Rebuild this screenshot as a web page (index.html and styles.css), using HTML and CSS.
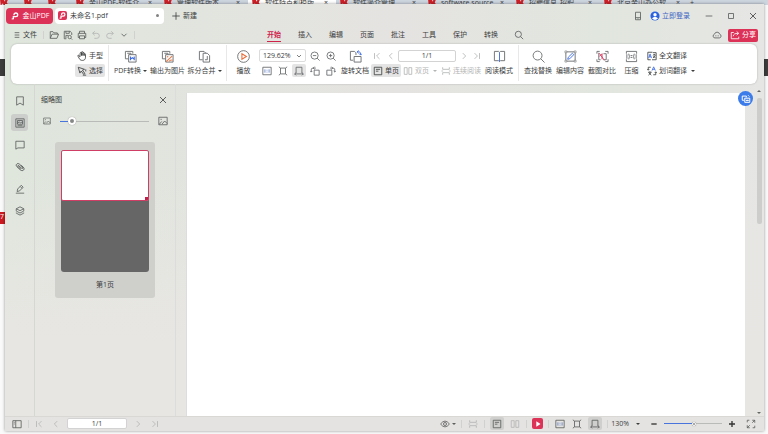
FILE: index.html
```html
<!DOCTYPE html>
<html lang="zh-CN">
<head>
<meta charset="utf-8">
<title>未命名1.pdf</title>
<link rel="stylesheet" href="styles.css">
</head>
<body>
<svg class="sprite" aria-hidden="true">
  <symbol id="logo" viewBox="0 0 12 12"><path d="M4 9.500V6.800h3a2.200 2.200 0 1 0-2.200-2.200v.6" fill="none" stroke="#fff" stroke-width="1.600"/><path d="M2 9.500h2.500" stroke="#fff" stroke-width="1.200"/></symbol>
  <symbol id="menu" viewBox="0 0 12 12"><path d="M2.500 2.500h7M2.500 6h7M2.500 9.500h7"/></symbol>
  <symbol id="folder" viewBox="0 0 12 12"><path d="M1.500 10V2h3.300l1.200 1.500h4V5M1.500 10 3.700 5H11.500l-2 5z"/></symbol>
  <symbol id="save" viewBox="0 0 12 12"><path d="M4 10.500H1.500v-9h7l2 2V6M3.500 1.500v2.500h4V1.500M3.500 10V6.500h3"/><circle cx="8" cy="8.500" r="2"/><path d="m9.500 10 1.500 1.500"/></symbol>
  <symbol id="print" viewBox="0 0 12 12"><path d="M3 4V1.500h6V4M3 9H1.500V4h9v5H9M3 7h6v3.500H3z"/></symbol>
  <symbol id="undo" viewBox="0 0 12 12"><path d="M4.500 1.500 2 4l2.500 2.500M2 4h5a3 3 0 0 1 0 6H4"/></symbol>
  <symbol id="redo" viewBox="0 0 12 12"><path d="M7.500 1.500 10 4 7.500 6.500M10 4H5a3 3 0 0 0 0 6h3"/></symbol>
  <symbol id="down" viewBox="0 0 12 12"><path d="m3 4.500 3 3 3-3"/></symbol>
  <symbol id="left" viewBox="0 0 12 12"><path d="M7.500 2.500 4 6l3.500 3.500"/></symbol>
  <symbol id="right" viewBox="0 0 12 12"><path d="M4.500 2.500 8 6 4.500 9.500"/></symbol>
  <symbol id="first" viewBox="0 0 12 12"><path d="M3 2.500v7M9 2.500 5.500 6 9 9.500"/></symbol>
  <symbol id="last" viewBox="0 0 12 12"><path d="M9 2.500v7M3 2.500 6.500 6 3 9.500"/></symbol>
  <symbol id="search" viewBox="0 0 12 12"><circle cx="5.200" cy="5.200" r="3.700"/><path d="m8 8 3 3"/></symbol>
  <symbol id="zoomout" viewBox="0 0 12 12"><circle cx="5.500" cy="5.500" r="4.300"/><path d="M3.500 5.500h4M8.600 8.600l2.900 2.900"/></symbol>
  <symbol id="zoomin" viewBox="0 0 12 12"><circle cx="5.500" cy="5.500" r="4.300"/><path d="M3.500 5.500h4M5.500 3.500v4M8.600 8.600l2.900 2.900"/></symbol>
  <symbol id="plus" viewBox="0 0 12 12"><path d="M6 1.500v9M1.500 6h9"/></symbol>
  <symbol id="minus" viewBox="0 0 12 12"><path d="M2 6h8"/></symbol>
  <symbol id="close" viewBox="0 0 12 12"><path d="m3 3 6 6M9 3 3 9"/></symbol>
  <symbol id="square" viewBox="0 0 12 12"><path d="M3 3h6v6H3z"/></symbol>
  <symbol id="phone" viewBox="0 0 12 12"><path d="M3 1.500h6v9H3zM3 8h6M5.500 9.300h1"/></symbol>
  <symbol id="user" viewBox="0 0 12 12"><circle cx="6" cy="6" r="5.500" fill="#2b62e0" stroke="none"/><circle cx="6" cy="4.500" r="2" fill="#fff" stroke="none"/><path d="M2.500 9c.5-2.500 6.500-2.500 7 0A5 5 0 0 1 2.500 9" fill="#fff" stroke="none"/></symbol>
  <symbol id="cloud" viewBox="0 0 12 12"><path d="M3.500 9.500a2.300 2.300 0 0 1-.5-4.500 3.200 3.200 0 0 1 6.200 0 2.300 2.300 0 0 1-.4 4.500zM3.600 7h.8M5.600 7h.8M7.600 7h.8"/></symbol>
  <symbol id="share" viewBox="0 0 12 12"><path d="M4.500 3H1.500v7.500h9V8M3.800 7.500c.4-2.500 2-3.500 6-3.500M8 1.800 10.500 4 8 6.200"/></symbol>
  <symbol id="hand" viewBox="0 0 12 12"><path d="M3.500 7 2.300 5.300c-.8-.7-1.600 0-1.200.8L3 9.500c.8 1.300 2 1.800 3.500 1.800 2.500 0 3.700-1.500 3.700-3.800V4c0-1-1.400-1-1.500 0v1.500V2.500c0-1-1.600-1-1.600 0v3V1.500c0-1-1.700-1-1.700 0v4V2.500c0-1-1.600-1-1.600 0z"/></symbol>
  <symbol id="pick" viewBox="0 0 12 12"><path d="m1.500 1.500 2 7L5 6l3 4 1.500-1-3-4 2.500-1zM10.500 4v2.500M7 11h4"/></symbol>
  <symbol id="convert" viewBox="0 0 14 14"><path d="M5 9.500H1.500v-8h8V4"/><path d="M3.500 3.500h4v2.500"/><path d="M5 5h8v8H5z" fill="#fff"/><path d="M7 7v4M11 7v4M7 9.800l2-1.500 2 1.500" stroke="#3d6be5" stroke-width="1.200"/></symbol>
  <symbol id="toimage" viewBox="0 0 14 14"><path d="M5 9.500H1.500v-8h8V4"/><path d="M3.500 3.500h4v2.500"/><path d="M5 5h8v8H5z" fill="#fff"/><path d="m5.500 12.500 6.500-6M9 12.500c0-1.500 2-2 3.500-1.500" stroke="#e57c4d" stroke-width="1.200"/><circle cx="7.200" cy="7.200" r=".8" fill="#e57c4d" stroke="none"/></symbol>
  <symbol id="split" viewBox="0 0 14 14"><path d="M5 10.500H1.500v-9h5l2 2M5.500 13V3.500h4.500l2.500 2.500v7zM7.500 10.500h2.500V6.500"/></symbol>
  <symbol id="play" viewBox="0 0 14 14"><circle cx="7" cy="7" r="6.300"/><path d="m5.300 4 4.800 3-4.800 3z" stroke="#e8703e" stroke-width="1.200"/></symbol>
  <symbol id="actual" viewBox="0 0 12 12"><path d="M1 1.500h10v9H1z"/><path d="M3.500 4v4M8.500 4v4M6 4.500v1M6 6.800v1" stroke="#5e7cc4"/></symbol>
  <symbol id="fitpage" viewBox="0 0 12 12"><path d="M3 2.500h6v7H3zM3 2.500 1 1M9 2.500 11 1M3 9.500 1 11M9 9.500l2 1.500"/></symbol>
  <symbol id="fitwidth" viewBox="0 0 12 12"><path d="M2.500 8.500v-7h7v7M.8 9.500h10.400M2.500 8 .8 9.500l1.700 1.700M9.500 8l1.700 1.500-1.700 1.700"/></symbol>
  <symbol id="rotl" viewBox="0 0 12 12"><path d="M5 5h6v6H5zM1.500 7V4.500Q1.500 2.500 3.500 2.500H7M5.500.8 3.800 2.500 5.500 4.200M.5 6l1 1.300L2.800 6"/></symbol>
  <symbol id="rotr" viewBox="0 0 12 12"><path d="M1 5h6v6H1zM10.500 7V4.500Q10.500 2.500 8.500 2.500H5M6.500.8l1.700 1.700-1.700 1.700M9.200 6l1.300 1.300L11.500 6"/></symbol>
  <symbol id="rotdoc" viewBox="0 0 14 14"><path d="M4.500 11H1.500V1.500H6l1.500 1.500v2.500M5.500 7H13v6H5.500z"/><path d="M9 2h2q1.500 0 1.500 3M10.300.5 8.700 2l1.600 1.500M11.200 4l1.300 1.500L13.800 4" stroke="#3d6be5"/></symbol>
  <symbol id="single" viewBox="0 0 12 12"><path d="M1.500 1.500h9v9h-9zM3.500 4h5M3.500 6.200h3"/></symbol>
  <symbol id="double" viewBox="0 0 12 12"><path d="M1.500 2h3.500v8H1.500zM7 2h3.500v8H7z"/></symbol>
  <symbol id="cont" viewBox="0 0 12 12"><path d="M2 1.500V4h8V1.500M2 10.500V8h8v2.500M.5 6h2M9.500 6h2"/></symbol>
  <symbol id="book" viewBox="0 0 14 14"><path d="M7 2.500 6 1.500H1.500v10H6l1 1 1-1h4.500v-10H8z"/><path d="M7 2.500v10" stroke="#3d6be5"/></symbol>
  <symbol id="find" viewBox="0 0 14 14"><circle cx="6" cy="6" r="4.800"/><path d="m9.500 9.500 4 4"/></symbol>
  <symbol id="edit" viewBox="0 0 14 14"><path d="M2 2h10v10H2z"/><path d="M1 1h2v2H1zM11 1h2v2h-2zM1 11h2v2H1zM11 11h2v2h-2z" fill="#fff" stroke-width=".6"/><path d="m4 10 .6-2.200L9 3.500l1.500 1.500-4.300 4.400z" stroke="#3d6be5"/></symbol>
  <symbol id="compare" viewBox="0 0 14 14"><path d="M1 4V1.500h3M10 1.500h3V4M1 10v2.500h3M10 12.500h3V10M8 4h3v6.500H8M3 3v7.500h2"/><path d="M3.500 3.500 9 11M3.500 7l3-3v6" stroke="#d8385f"/></symbol>
  <symbol id="compress" viewBox="0 0 14 14"><path d="M1.500 4V1.500h11V4M1.500 10v2.500h11V10M2 4.500v5M12 4.500v5M4 4q1.500 3 0 6M10 4q-1.500 3 0 6M6 6h2M6 8h2"/></symbol>
  <symbol id="trans" viewBox="0 0 12 12"><path d="M4.500 10.500H1v-9h5.500M7 2h4v8.500H6"/><path d="m2 8.500 1.700-5 1.700 5M2.500 7h2.400" stroke="#3d6be5"/><path d="M7.500 4.500h2.500M8.700 3.500v1M7.300 8.500 10 5M7.500 5.500 10 8.500"/></symbol>
  <symbol id="wordtrans" viewBox="0 0 12 12"><path d="m6 5.500 2-4.500 2 4.500M6.800 4h2.500" stroke="#3d6be5"/><path d="M4.500 1.500H1.500V5M.3 3.800 1.500 5l1.200-1.200M7.500 10.500h3V7M9.300 8.200 10.500 7l1.200 1.200M1.500 7.500h4M3.500 6.500v1M1.700 11 5 8M2 8l3.200 3"/></symbol>
  <symbol id="bookmark" viewBox="0 0 12 12"><path d="M2 1h8v10L6 8.500 2 11z"/></symbol>
  <symbol id="thumbs" viewBox="0 0 12 12"><path d="M1 1h10v10H1zM3 3h6v4.500H3zM3 6.500l2-2 1.500 1.500L8 5l1 1M3 9.300h6"/></symbol>
  <symbol id="comment" viewBox="0 0 12 12"><path d="M1 1.500h10v8H3.500L1 11z"/></symbol>
  <symbol id="clip" viewBox="0 0 12 12"><path d="m4 4 4 3.500c1 1 2-.3 1-1.300L5.500 2.700C3 .5 0 3.300 2.300 5.600L6.500 9.500c3 2.300 5.700-.7 3.600-3.200L7.500 4M4 4c-.8.800-.5 1.500.2 2.200l2.800 2.300" stroke-width="1.200"/></symbol>
  <symbol id="pen" viewBox="0 0 12 12"><path d="M1 11h10M2.500 9l.7-3L7.500 1.500 9.800 3.800 5.500 8.300zM6.300 3 8.500 5.200"/></symbol>
  <symbol id="layers" viewBox="0 0 12 12"><path d="m6 1 4.500 2.300L6 5.600 1.500 3.300zM1.500 5.500v.6L6 8.400l4.500-2.300v-.6M1.500 8v.6L6 10.900l4.500-2.300V8M1.500 3.300v2.200M10.500 3.300v2.200"/></symbol>
  <symbol id="image" viewBox="0 0 12 12"><path d="M1 1.500h10v9H1zM1.500 10l3-3.500M5 9.500l3-3.500 3 3M3 4h1.500"/></symbol>
  <symbol id="panel" viewBox="0 0 12 12"><path d="M1 2h10v8.500H1zM4.500 2v8.500M2.200 4h1M2.200 6h1"/></symbol>
  <symbol id="eye" viewBox="0 0 12 12"><path d="M.7 6q5.300-7 10.600 0Q6 13 .7 6z"/><circle cx="6" cy="6" r="1.800"/></symbol>
  <symbol id="full" viewBox="0 0 12 12"><path d="M1.500 4v-2.500h2.500M7.500 1.500h3v3M10.500 8v2.500H8M4.500 10.500h-3v-3M7.500 4.500l3-3M4.500 7.500l-3 3"/></symbol>
  <symbol id="slide" viewBox="0 0 12 12"><path d="m4 2.800 5 3.200-5 3.200z" fill="#fff" stroke="none"/></symbol>
  <symbol id="convfloat" viewBox="0 0 12 12"><path d="M3.500 7.500h-2v-5h5v1.500M4.500 5h6v5h-6zM6 7l.7 1.500.8-1.500.8 1.500L9 7M8.500 1.500l1.500 1.500" stroke="#fff" fill="none" stroke-width="1.200"/></symbol>
  <symbol id="fav" viewBox="0 0 12 12"><path d="M0 1h5l1 4 2-4h3L9 6l2 3-6 2-1-4-3 3z" fill="#cf2027" stroke="none"/></symbol>
</svg>

<div class="backdrop" aria-hidden="true">
  <div class="back-tabs">
    <span class="pin"><svg><use href="#fav"/></svg></span>
    <span class="pin"><svg><use href="#fav"/></svg></span>
    <span class="pin"><svg><use href="#fav"/></svg></span>
    <span class="back-tab"><svg><use href="#fav"/></svg><b>金山PDF-软件介</b><i>×</i></span>
    <span class="back-tab"><svg><use href="#fav"/></svg><b>管理软件版本</b><i>×</i></span>
    <span class="back-tab front"><svg><use href="#fav"/></svg><b>软件特点和模版</b><i>×</i></span>
    <span class="back-tab"><svg><use href="#fav"/></svg><b>软件简介管理</b><i>×</i></span>
    <span class="back-tab"><svg><use href="#fav"/></svg><b>software.source</b><i>×</i></span>
    <span class="back-tab"><svg><use href="#fav"/></svg><b>招聘信息_招职</b><i>×</i></span>
    <span class="back-tab"><svg><use href="#fav"/></svg><b>北京金山办公软</b><i>×</i></span>
    <span class="back-new">+</span>
  </div>
  <div class="back-band"></div>
  <div class="back-flag">7</div>
</div>

<div class="window">
  <header class="titlebar">
    <button class="home-tab"><svg class="ic"><use href="#logo"/></svg>金山PDF</button>
    <button class="file-tab"><span class="badge"><svg class="ic"><use href="#logo"/></svg></span><span class="name">未命名1.pdf</span><span class="dot"></span></button>
    <button class="new-tab"><svg class="ic"><use href="#plus"/></svg>新建</button>
    <div class="title-right">
      <button class="icon-btn" aria-label="设备"><svg class="ic"><use href="#phone"/></svg></button>
      <button class="login"><svg class="ic"><use href="#user"/></svg>立即登录</button>
      <div class="win-controls">
        <button class="icon-btn" aria-label="最小化"><svg class="ic"><use href="#minus"/></svg></button>
        <button class="icon-btn" aria-label="最大化"><svg class="ic"><use href="#square"/></svg></button>
        <button class="icon-btn" aria-label="关闭"><svg class="ic big"><use href="#close"/></svg></button>
      </div>
    </div>
  </header>

  <nav class="menubar">
    <div class="quick">
      <button class="file-menu"><svg class="ic small"><use href="#menu"/></svg>文件</button>
      <span class="vline"></span>
      <button class="icon-btn" aria-label="打开"><svg class="ic"><use href="#folder"/></svg></button>
      <button class="icon-btn" aria-label="保存"><svg class="ic"><use href="#save"/></svg></button>
      <button class="icon-btn" aria-label="打印"><svg class="ic"><use href="#print"/></svg></button>
      <button class="icon-btn faint" aria-label="撤销"><svg class="ic"><use href="#undo"/></svg></button>
      <button class="icon-btn faint" aria-label="恢复"><svg class="ic"><use href="#redo"/></svg></button>
      <button class="icon-btn" aria-label="更多"><svg class="ic"><use href="#down"/></svg></button>
      <span class="vline"></span>
    </div>
    <div class="menus">
      <a href="#" class="active">开始</a><a href="#">插入</a><a href="#">编辑</a><a href="#">页面</a><a href="#">批注</a><a href="#">工具</a><a href="#">保护</a><a href="#">转换</a>
      <button class="icon-btn" aria-label="搜索"><svg class="ic"><use href="#search"/></svg></button>
    </div>
    <div class="menu-right">
      <button class="icon-btn" aria-label="云"><svg class="ic"><use href="#cloud"/></svg></button>
      <button class="share"><svg class="ic"><use href="#share"/></svg>分享</button>
    </div>
  </nav>

  <section class="ribbon">
    <div class="stack modes">
      <button class="line"><svg class="ic"><use href="#hand"/></svg>手型</button>
      <button class="line on"><svg class="ic"><use href="#pick"/></svg>选择</button>
    </div>
    <span class="rule"></span>
    <button class="tool wide"><svg class="ic large"><use href="#convert"/></svg><span>PDF转换<i class="caret"></i></span></button>
    <button class="tool wide"><svg class="ic large"><use href="#toimage"/></svg><span>输出为图片</span></button>
    <button class="tool wide"><svg class="ic large"><use href="#split"/></svg><span>拆分合并<i class="caret"></i></span></button>
    <span class="rule"></span>
    <button class="tool narrow"><svg class="ic large"><use href="#play"/></svg><span>播放</span></button>
    <div class="stack zoom">
      <div class="row">
        <span class="select-wrap"><select aria-label="缩放比例"><option>129.62%</option></select><svg class="ic small"><use href="#down"/></svg></span>
        <button class="cell" aria-label="缩小"><svg class="ic"><use href="#zoomout"/></svg></button>
        <button class="cell" aria-label="放大"><svg class="ic"><use href="#zoomin"/></svg></button>
      </div>
      <div class="row">
        <button class="cell" aria-label="实际大小"><svg class="ic"><use href="#actual"/></svg></button>
        <button class="cell" aria-label="适合页面"><svg class="ic"><use href="#fitpage"/></svg></button>
        <button class="cell on" aria-label="适合宽度"><svg class="ic"><use href="#fitwidth"/></svg></button>
        <button class="cell" aria-label="向左旋转"><svg class="ic"><use href="#rotl"/></svg></button>
        <button class="cell" aria-label="向右旋转"><svg class="ic"><use href="#rotr"/></svg></button>
      </div>
    </div>
    <button class="tool"><svg class="ic large"><use href="#rotdoc"/></svg><span>旋转文档</span></button>
    <div class="stack pages">
      <div class="row spread">
        <button class="icon-btn faint" aria-label="首页"><svg class="ic"><use href="#first"/></svg></button>
        <button class="icon-btn faint" aria-label="上一页"><svg class="ic"><use href="#left"/></svg></button>
        <input class="page-box" type="text" value="1/1" aria-label="页码">
        <button class="icon-btn faint" aria-label="下一页"><svg class="ic"><use href="#right"/></svg></button>
        <button class="icon-btn faint" aria-label="末页"><svg class="ic"><use href="#last"/></svg></button>
      </div>
      <div class="row spread">
        <button class="line on"><svg class="ic"><use href="#single"/></svg>单页</button>
        <button class="line faint"><svg class="ic"><use href="#double"/></svg>双页<i class="caret"></i></button>
        <button class="line faint"><svg class="ic"><use href="#cont"/></svg>连续阅读</button>
      </div>
    </div>
    <button class="tool"><svg class="ic large"><use href="#book"/></svg><span>阅读模式</span></button>
    <span class="rule"></span>
    <button class="tool"><svg class="ic large"><use href="#find"/></svg><span>查找替换</span></button>
    <button class="tool"><svg class="ic large"><use href="#edit"/></svg><span>编辑内容</span></button>
    <button class="tool"><svg class="ic large"><use href="#compare"/></svg><span>截图对比</span></button>
    <button class="tool narrow"><svg class="ic large"><use href="#compress"/></svg><span>压缩</span></button>
    <div class="stack">
      <button class="line"><svg class="ic"><use href="#trans"/></svg>全文翻译</button>
      <button class="line"><svg class="ic"><use href="#wordtrans"/></svg>划词翻译<i class="caret"></i></button>
    </div>
  </section>

  <main class="workspace">
    <aside class="rail">
      <button aria-label="书签"><svg class="ic"><use href="#bookmark"/></svg></button>
      <button class="on" aria-label="缩略图"><svg class="ic"><use href="#thumbs"/></svg></button>
      <button aria-label="批注"><svg class="ic"><use href="#comment"/></svg></button>
      <button aria-label="附件"><svg class="ic"><use href="#clip"/></svg></button>
      <button aria-label="签名"><svg class="ic"><use href="#pen"/></svg></button>
      <button aria-label="图层"><svg class="ic"><use href="#layers"/></svg></button>
    </aside>
    <section class="thumb-panel">
      <div class="panel-head"><h2>缩略图</h2><button class="icon-btn" aria-label="关闭面板"><svg class="ic big"><use href="#close"/></svg></button></div>
      <div class="size-row">
        <svg class="ic small"><use href="#image"/></svg>
        <input class="slider thumb-size" type="range" min="0" max="100" value="10" aria-label="缩略图大小">
        <svg class="ic"><use href="#image"/></svg>
      </div>
      <figure class="thumb">
        <div class="sheet"><div class="view"></div></div>
        <figcaption>第1页</figcaption>
      </figure>
    </section>
    <section class="viewer">
      <div class="document"></div>
      <div class="scroll"><i class="arrow up"></i><div class="scroll-thumb"></div><i class="arrow"></i></div>
      <button class="float-btn" aria-label="转换"><svg class="ic"><use href="#convfloat"/></svg></button>
    </section>
  </main>

  <footer class="status">
    <button class="icon-btn" aria-label="侧栏"><svg class="ic"><use href="#panel"/></svg></button>
    <span class="vline"></span>
    <div class="pager">
      <button class="icon-btn faint" aria-label="首页"><svg class="ic"><use href="#first"/></svg></button>
      <button class="icon-btn faint" aria-label="上一页"><svg class="ic"><use href="#left"/></svg></button>
      <input class="page-box" type="text" value="1/1" aria-label="当前页">
      <button class="icon-btn faint" aria-label="下一页"><svg class="ic"><use href="#right"/></svg></button>
      <button class="icon-btn faint" aria-label="末页"><svg class="ic"><use href="#last"/></svg></button>
    </div>
    <div class="views">
      <button class="icon-btn eye" aria-label="护眼"><svg class="ic"><use href="#eye"/></svg><i class="caret"></i></button>
      <span class="vline"></span>
      <button class="icon-btn faint" aria-label="连续阅读"><svg class="ic"><use href="#cont"/></svg></button>
      <span class="vline"></span>
      <div class="pair">
        <button class="icon-btn on" aria-label="单页"><svg class="ic"><use href="#single"/></svg></button>
        <button class="icon-btn faint" aria-label="双页"><svg class="ic"><use href="#double"/></svg></button>
      </div>
      <span class="vline"></span>
      <button class="icon-btn slide" aria-label="播放"><svg class="ic"><use href="#slide"/></svg></button>
      <span class="vline"></span>
      <div class="pair">
        <button class="icon-btn" aria-label="实际大小"><svg class="ic"><use href="#actual"/></svg></button>
        <button class="icon-btn" aria-label="适合页面"><svg class="ic"><use href="#fitpage"/></svg></button>
        <button class="icon-btn on" aria-label="适合宽度"><svg class="ic"><use href="#fitwidth"/></svg></button>
      </div>
      <span class="vline"></span>
    </div>
    <div class="scale">
      <button class="percent">130%<i class="caret"></i></button>
      <button class="icon-btn strong" aria-label="缩小"><svg class="ic small"><use href="#minus"/></svg></button>
      <input class="slider page-zoom" type="range" min="0" max="100" value="52" aria-label="页面缩放">
      <button class="icon-btn strong" aria-label="放大"><svg class="ic small"><use href="#plus"/></svg></button>
      <button class="icon-btn full" aria-label="全屏"><svg class="ic"><use href="#full"/></svg></button>
    </div>
  </footer>
</div>
</body>
</html>
```

FILE: styles.css
```css
* { box-sizing: border-box; }

body {
  margin: 0;
  min-height: 100vh;
  display: flex;
  padding: 4px 4px 3px 5px;
  background: #fafafa;
  color: #3c3e3e;
  font: 7px/10px "Open Sans", "Noto Sans CJK SC", sans-serif;
}

button, input, select {
  margin: 0;
  padding: 0;
  border: 0;
  background: none;
  color: inherit;
  font: inherit;
}

button {
  display: flex;
  align-items: center;
  justify-content: center;
  white-space: nowrap;
}

a { color: inherit; text-decoration: none; }
i { font-style: normal; }
.sprite { position: absolute; width: 0; height: 0; }

.ic {
  width: 10px;
  height: 10px;
  flex: none;
  fill: none;
  stroke: currentColor;
  stroke-width: 1;
}
.ic.small { width: 8px; height: 8px; }
.ic.big { width: 12px; height: 12px; }
.ic.large { width: 13px; height: 13px; color: #6c6e70; }

.icon-btn { width: 12px; height: 12px; flex: none; color: #5c5f5e; }
.faint { color: #b3b5b4; }
.vline { width: 1px; height: 8px; background: #d0d2cf; flex: none; }
.caret {
  margin-left: 2px;
  border: 2px solid transparent;
  border-top-color: currentColor;
  border-bottom: 0;
}

/* Browser window behind the app */
.backdrop { position: absolute; inset: 0; overflow: hidden; z-index: -1; }
.back-tabs {
  display: flex;
  align-items: center;
  height: 5px;
  background: #cdd5df;
  overflow: hidden;
}
.back-tabs svg { width: 9px; height: 9px; flex: none; }
.pin { width: 24px; display: flex; }
.back-tab { width: 88px; padding: 0 8px 0 4px; display: flex; align-items: center; gap: 4px; flex: none; }
.back-tab b { flex: 1; font-weight: 400; white-space: nowrap; }
.back-tab.front { background: #fff; }
.back-new { padding-left: 2px; }
.back-band { height: 17px; margin-top: 54px; background: #3e3d3e; }
.back-flag { width: 5px; height: 12px; margin-top: 136px; background: #cb1a21; color: #fff; }

/* App window */
.window {
  flex: 1;
  min-width: 0;
  display: flex;
  flex-direction: column;
  background: linear-gradient(to bottom, rgba(232, 230, 227, 0) 40%, #e8e6e3 80%),
    linear-gradient(to right, #dfe6dc, #e5e3e1 52%, #e1e6de 78%, #e6e6e4);
  box-shadow: 0 0 3px rgba(0, 0, 0, .4);
}

.titlebar { display: flex; align-items: center; height: 23px; padding: 0 5px 0 1px; }
.home-tab {
  width: 47px;
  height: 16px;
  gap: 3px;
  border-radius: 4px;
  background: #dd3258;
  color: #fff;
}
.file-tab {
  width: 109px;
  height: 16px;
  margin-left: 2px;
  padding: 0 5px 0 3px;
  gap: 3px;
  border-radius: 4px;
  background: #fff;
}
.badge { display: flex; width: 9px; height: 9px; border-radius: 2px; background: #dd3258; }
.badge .ic { width: 9px; height: 9px; }
.name { flex: 1; text-align: left; }
.dot { width: 3px; height: 3px; border-radius: 50%; background: #818383; }
.new-tab { margin-left: 7px; gap: 2px; }
.title-right { display: flex; align-items: center; margin-left: auto; }
.login { margin-left: 6px; gap: 2px; color: #3e65c4; }
.win-controls { display: flex; gap: 10px; margin-left: 13px; }

.menubar { display: flex; align-items: center; height: 16px; padding: 0 6px 0 8px; }
.quick { display: flex; align-items: center; gap: 2px; width: 254px; }
.quick .vline { margin: 0 2px; }
.file-menu { gap: 2px; margin-right: 2px; }
.menus { display: flex; align-items: center; gap: 17px; }
.menus a { height: 14px; padding-top: 2px; }
.menus .icon-btn { margin-left: -2px; }
.menus .active { color: #d0234c; font-weight: 700; border-bottom: 1px solid #d0234c; }
.menu-right { display: flex; align-items: center; gap: 5px; margin-left: auto; }
.share {
  width: 30px;
  height: 13px;
  gap: 2px;
  border-radius: 2px;
  background: #dd3258;
  color: #fff;
}

.ribbon {
  display: flex;
  justify-content: center;
  align-items: center;
  height: 40px;
  margin: 1px 7px 0 6px;
  padding: 0 0 2px 4px;
  border-radius: 6px;
  background: #fff;
  box-shadow: 0 0 2px rgba(0, 0, 0, .25);
}
.rule { width: 1px; height: 36px; margin: 0 3px; background: #e8e8e8; }
.stack { display: flex; flex-direction: column; gap: 2px; }
.row { display: flex; align-items: center; height: 13px; }
.line { height: 13px; gap: 2px; padding: 0 2px; justify-content: flex-start; }
.on { border-radius: 2px; background: #e4e4e4; }
.modes { width: 30px; }
.tool { width: 32px; flex-direction: column; gap: 3px; }
.tool span { display: flex; align-items: center; }
.tool.wide { width: 37px; }
.tool.narrow { width: 27px; }
.zoom { margin-left: 2px; }
.cell { width: 16px; height: 13px; color: #626466; }
.cell.on { width: 14px; margin: 0 1px; }
.select-wrap {
  display: flex;
  align-items: center;
  width: 47px;
  height: 13px;
  margin-right: 1px;
  padding: 0 2px 0 3px;
  border: 1px solid #dcdcdc;
  border-radius: 2px;
}
.select-wrap select { flex: 1; min-width: 0; appearance: none; }
.pages { width: 112px; }
.spread { justify-content: space-between; }
.page-box {
  width: 58px;
  height: 12px;
  border: 1px solid #d3d3d3;
  border-radius: 2px;
  background: #fff;
  text-align: center;
}

.workspace { flex: 1; min-height: 0; display: flex; }
.rail {
  width: 30px;
  display: flex;
  flex-direction: column;
  align-items: center;
  gap: 5px;
  padding-top: 8px;
  border-right: 1px solid #d4d7d2;
}
.rail button { width: 17px; height: 17px; color: #5c5f5e; }
.rail .on { background: #cbcecb; border-radius: 3px; }

.thumb-panel { width: 141px; padding: 0 6px; border-right: 1px solid #dbddda; }
.panel-head { display: flex; align-items: center; justify-content: space-between; height: 32px; }
.panel-head h2 { margin: 0; font-size: 7px; font-weight: 400; }
.size-row { display: flex; align-items: center; justify-content: space-between; height: 10px; padding: 0 1px 0 2px; color: #5c5f5e; }
.thumb {
  width: 100px;
  margin: 16px 0 0 14px;
  padding: 8px 6px 0;
  border-radius: 3px;
  background: #cfd0cc;
}
.sheet { height: 122px; border-radius: 3px; overflow: hidden; background: #666; }
.view {
  height: 51px;
  border: 1px solid #ce3e65;
  border-radius: 2px;
  background: linear-gradient(#c41e4a, #c41e4a) right bottom / 3px 3px no-repeat, #fff;
}
.thumb figcaption { height: 26px; line-height: 26px; text-align: center; }

.slider { appearance: none; height: 8px; }
.slider::-webkit-slider-thumb {
  appearance: none;
  width: 8px;
  height: 8px;
  border: 2px solid #fff;
  border-radius: 50%;
  background: #858786;
  box-shadow: 0 0 1px #777;
}
.thumb-size { width: 89px; background: linear-gradient(to right, #4874dc 12%, #b9bbb9 12%) center / 100% 1px no-repeat; }
.page-zoom { width: 58px; background: linear-gradient(to right, #4874dc 50%, #b9bbb9 50%) center / 100% 1px no-repeat; }
.page-zoom::-webkit-slider-thumb { width: 4px; height: 4px; border-width: 1px; }

.viewer { flex: 1; display: flex; position: relative; padding: 9px 0 0 11px; }
.document { flex: 1; background: #fff; box-shadow: -1px 0 0 #dddedb; }
.scroll { width: 19px; display: flex; flex-direction: column; align-items: flex-end; padding: 0 2px 2px 0; }
.scroll-thumb { width: 5px; height: 126px; margin: 6px 0 auto; border-radius: 2px; background: #cdcecc; }
.arrow { margin-right: 1px; border: 2px solid transparent; border-top-color: #646665; border-bottom: 0; }
.arrow.up { margin-top: -3px; border-top: 0; border-bottom: 2px solid #646665; }
.float-btn {
  position: absolute;
  top: 7px;
  right: 11px;
  width: 15px;
  height: 15px;
  border-radius: 50%;
  background: #3b7bea;
}

.status {
  display: flex;
  align-items: center;
  height: 15px;
  padding: 0 7px 1px 6px;
  background: #e5e3e1;
  border-top: 1px solid #d9d8d5;
}
.status > .vline { margin: 0 4px 0 5px; }
.status .on { width: 14px; height: 13px; background: #cfcfcd; }
.pager { display: flex; align-items: center; gap: 5px; }
.pager .page-box { width: 60px; height: 11px; }
.views { display: flex; align-items: center; gap: 5px; margin-left: auto; }
.pair { display: flex; align-items: center; gap: 5px; }
.icon-btn.eye { width: 17px; }
.icon-btn.slide { width: 11px; height: 11px; border-radius: 2px; background: #dd3258; }
.scale { display: flex; align-items: center; gap: 5px; margin-left: 3px; }
.percent { gap: 5px; margin-right: 4px; }
.strong { width: 10px; color: #333; }
.strong .ic { stroke-width: 2; }
.icon-btn.full { margin-left: 3px; }
```
